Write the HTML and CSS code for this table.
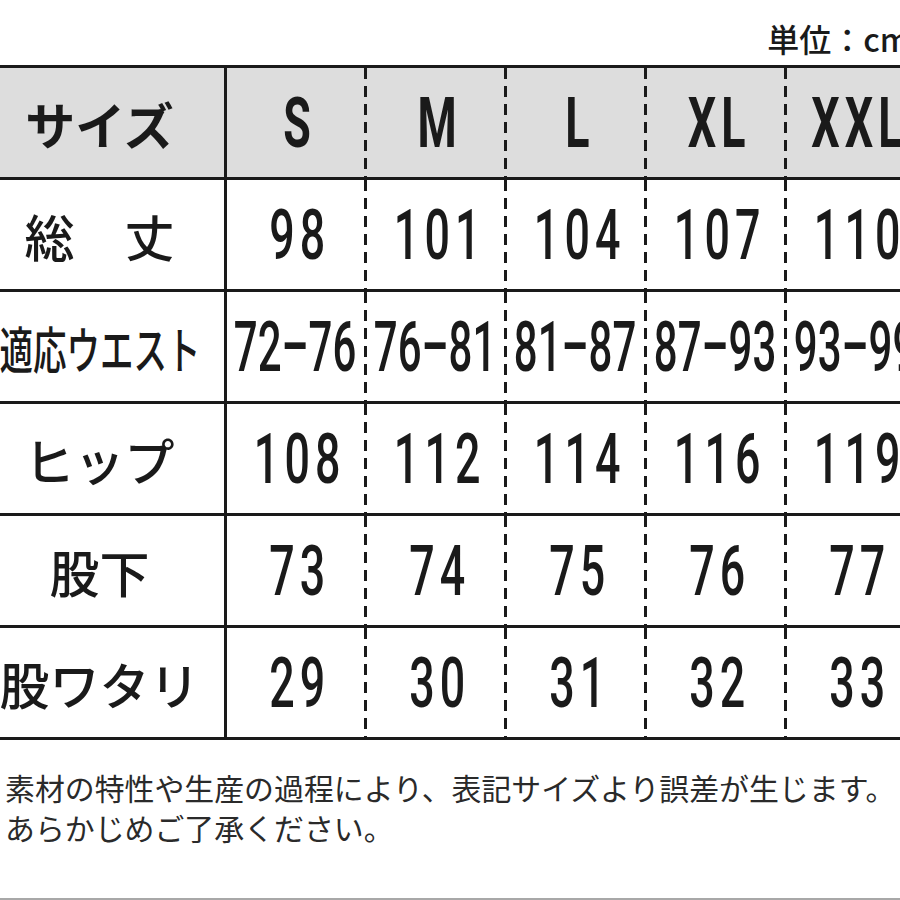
FILE: index.html
```html
<!DOCTYPE html>
<html lang="ja">
<head>
<meta charset="utf-8">
<title>サイズ表</title>
<link rel="stylesheet" href="styles.css">
</head>
<body>
<div class="page">
  <div class="unit-row"><span class="unit">単位：cm</span></div>
  <div class="chart">
    <div class="cell label head"><span>サイズ</span></div>
    <div class="cell head first"><span class="num">S</span></div>
    <div class="cell head dash"><span class="num">M</span></div>
    <div class="cell head dash"><span class="num">L</span></div>
    <div class="cell head dash"><span class="num">XL</span></div>
    <div class="cell head dash"><span class="num">XXL</span></div>

    <div class="cell label"><span>総　丈</span></div>
    <div class="cell first"><span class="num">98</span></div>
    <div class="cell dash"><span class="num">101</span></div>
    <div class="cell dash"><span class="num">104</span></div>
    <div class="cell dash"><span class="num">107</span></div>
    <div class="cell dash"><span class="num">110</span></div>

    <div class="cell label"><span class="squeeze">適応ウエスト</span></div>
    <div class="cell first"><span class="num range">72–76</span></div>
    <div class="cell dash"><span class="num range">76–81</span></div>
    <div class="cell dash"><span class="num range">81–87</span></div>
    <div class="cell dash"><span class="num range">87–93</span></div>
    <div class="cell dash"><span class="num range">93–99</span></div>

    <div class="cell label"><span>ヒップ</span></div>
    <div class="cell first"><span class="num">108</span></div>
    <div class="cell dash"><span class="num">112</span></div>
    <div class="cell dash"><span class="num">114</span></div>
    <div class="cell dash"><span class="num">116</span></div>
    <div class="cell dash"><span class="num">119</span></div>

    <div class="cell label"><span>股下</span></div>
    <div class="cell first"><span class="num">73</span></div>
    <div class="cell dash"><span class="num">74</span></div>
    <div class="cell dash"><span class="num">75</span></div>
    <div class="cell dash"><span class="num">76</span></div>
    <div class="cell dash"><span class="num">77</span></div>

    <div class="cell label"><span>股ワタリ</span></div>
    <div class="cell first"><span class="num">29</span></div>
    <div class="cell dash"><span class="num">30</span></div>
    <div class="cell dash"><span class="num">31</span></div>
    <div class="cell dash"><span class="num">32</span></div>
    <div class="cell dash"><span class="num">33</span></div>
  </div>
  <p class="note">素材の特性や生産の過程により、表記サイズより誤差が生じます。<br>あらかじめご了承ください。</p>
</div>
</body>
</html>
```

FILE: styles.css
```css
html, body {
  margin: 0;
  padding: 0;
  background: #ffffff;
}

.page {
  width: 900px;
  height: 900px;
  overflow: hidden;
  box-sizing: border-box;
  border-bottom: 2px solid #a8a8a8;
  font-family: "Noto Sans CJK JP", "Noto Sans", sans-serif;
  color: #1a1a1a;
}

.unit-row {
  height: 65px;
  display: flex;
  justify-content: flex-end;
  align-items: flex-end;
  margin-right: -10px;
}

.unit {
  font-size: 32px;
  font-weight: 500;
  line-height: 1;
  padding-bottom: 11px;
  color: #1a1a1a;
}

.chart {
  display: grid;
  grid-template-columns: 252px 137px repeat(4, 140px);
  grid-auto-rows: 112px;
  margin-left: -25px;
  width: 949px;
  border-top: 3px solid #1a1a1a;
}

.cell {
  box-sizing: border-box;
  border-bottom: 3px solid #1a1a1a;
  display: flex;
  align-items: center;
  justify-content: center;
  overflow: hidden;
}

.head {
  background-color: #dddddd;
}

.label {
  border-right: 3px solid #1a1a1a;
  font-size: 50px;
  font-weight: 500;
  line-height: 1;
}

.label.head {
  font-weight: 700;
}

.squeeze {
  display: inline-block;
  white-space: nowrap;
  transform: scaleX(0.67);
}

.dash {
  padding-left: 3px;
  background-image: linear-gradient(to bottom, #1a1a1a 62%, transparent 62%);
  background-size: 3px 18px;
  background-repeat: repeat-y;
  background-position: left top;
}

.num {
  display: inline-block;
  white-space: nowrap;
  font-family: Roboto, "Liberation Sans", sans-serif;
  font-weight: 500;
  font-size: 70px;
  line-height: 1;
  letter-spacing: 8px;
  margin-right: -8px;
  transform: scaleX(0.64);
}

.head .num {
  font-weight: 700;
}

.range {
  letter-spacing: 0;
  margin-right: 0;
  transform: scaleX(0.6);
}

.note {
  margin: 27px 0 0 5px;
  font-size: 29.9px;
  font-weight: 400;
  line-height: 40px;
  color: #2a2a2a;
  white-space: nowrap;
}
```
